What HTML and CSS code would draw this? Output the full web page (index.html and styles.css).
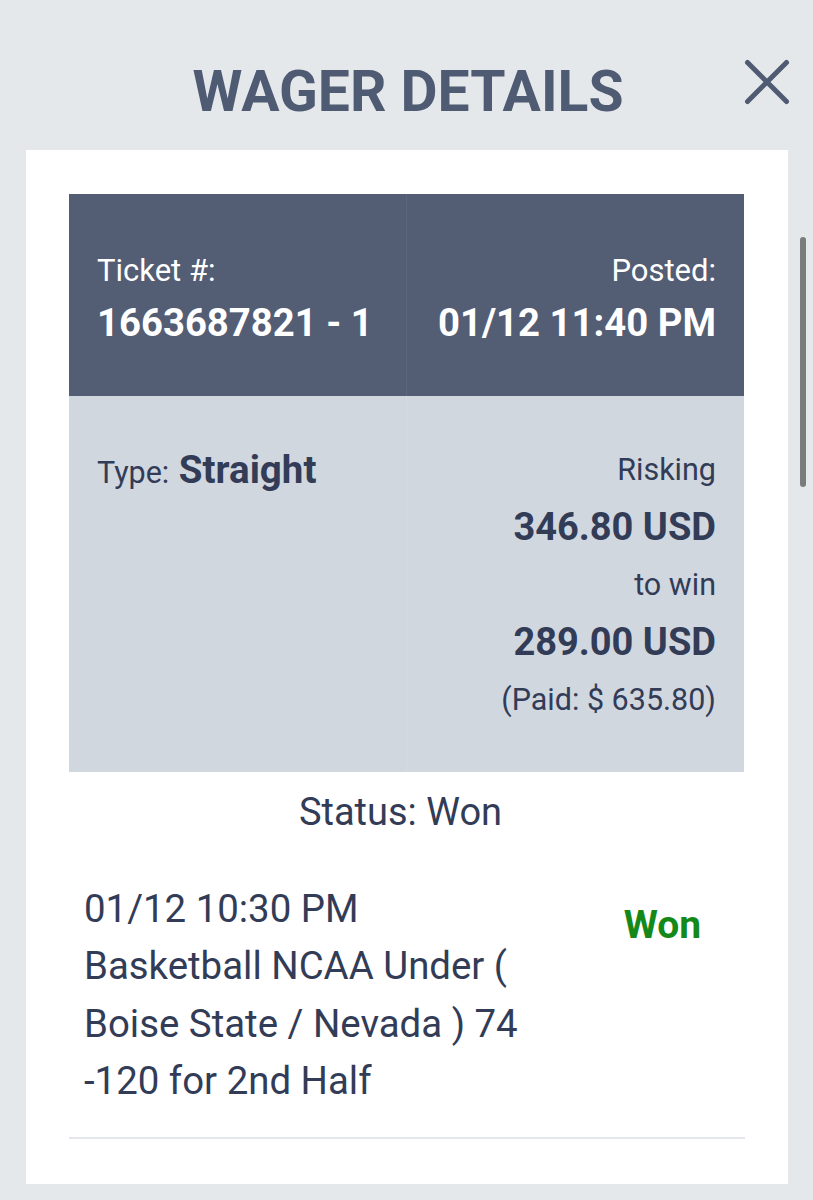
FILE: index.html
```html
<!DOCTYPE html>
<html>
<head>
<meta charset="utf-8">
<link rel="stylesheet" href="styles.css">
</head>
<body>
<div class="page">
  <header class="top">
    <h1 class="title">WAGER DETAILS</h1>
    <button class="close" aria-label="Close">
      <svg width="48" height="48" viewBox="0 0 48 48"><path d="M4.5 4.5 L43.5 43.5 M43.5 4.5 L4.5 43.5" stroke="#4f5a73" stroke-width="5" stroke-linecap="round" fill="none"/></svg>
    </button>
  </header>
  <main class="card">
    <div class="ticket">
      <div class="cell dark left">
        <div class="label">Ticket #:</div>
        <div class="value">1663687821 - 1</div>
      </div>
      <div class="cell dark right">
        <div class="label">Posted:</div>
        <div class="value">01/12 11:40 PM</div>
      </div>
      <div class="cell light left">
        <div class="type"><span class="type-label">Type:</span> <span class="type-value">Straight</span></div>
      </div>
      <div class="cell light right amounts">
        <div class="amt-label">Risking</div>
        <div class="amt">346.80 USD</div>
        <div class="amt-label">to win</div>
        <div class="amt">289.00 USD</div>
        <div class="amt-label">(Paid: $ 635.80)</div>
      </div>
    </div>
    <div class="status">Status: Won</div>
    <div class="bet">
      <div class="bet-text">01/12 10:30 PM<br>Basketball NCAA Under ( Boise State / Nevada ) 74 -120 for 2nd Half</div>
      <div class="bet-result">Won</div>
    </div>
    <div class="rule"></div>
  </main>
  <div class="scrollbar"></div>
</div>
</body>
</html>
```
FILE: styles.css
```css
html, body {
  margin: 0;
  padding: 0;
}
body {
  background: #e5e8eb;
  font-family: Roboto, "Noto Sans", sans-serif;
  color: #323c57;
  width: 813px;
  height: 1200px;
  overflow: hidden;
}
.page {
  position: relative;
  height: 1200px;
}
.top {
  height: 150px;
  display: flex;
  align-items: center;
  justify-content: center;
  position: relative;
}
.title {
  margin: 0;
  padding-top: 34px;
  padding-left: 3px;
  font-size: 57px;
  line-height: 66px;
  font-weight: 700;
  color: #4f5a73;
}
.close {
  position: absolute;
  right: 22px;
  top: 58px;
  border: 0;
  background: none;
  padding: 0;
  width: 48px;
  height: 48px;
}
.close svg { display: block; }
.card {
  margin-left: 26px;
  width: 762px;
  background: #ffffff;
  padding: 44px 43px 45px;
  box-sizing: border-box;
}
.ticket {
  display: grid;
  grid-template-columns: 337px 338px;
  grid-template-rows: 202px 376px;
}
.cell {
  box-sizing: border-box;
  padding: 0 28px;
}
.dark {
  background: #535d74;
  color: #ffffff;
  display: flex;
  flex-direction: column;
  justify-content: center;
}
.light {
  background: #d1d7df;
}
.right { text-align: right; border-left: 1px solid rgba(255,255,255,0.07); }
.dark.right { border-left-color: #5c6579; }
.light.right { border-left-color: #d6dbe2; }
.label {
  font-size: 31px;
  line-height: 36px;
  margin-top: 8px;
}
.value {
  font-size: 38.3px;
  font-weight: 700;
  line-height: 44px;
  margin-top: 12px;
}
.type {
  padding-top: 54px;
  font-size: 30.5px;
  line-height: 40px;
}
.type-value {
  font-size: 38.5px;
  font-weight: 700;
  margin-left: 2px;
}
.amounts {
  padding-top: 45px;
}
.amt-label {
  font-size: 30.5px;
  line-height: 58px;
}
.amt {
  font-size: 38px;
  font-weight: 700;
  line-height: 57px;
}
.status {
  text-align: center;
  font-size: 38px;
  line-height: 44px;
  padding-top: 18px;
  margin-right: 13px;
}
.bet {
  display: flex;
  padding: 46px 0 0 15px;
}
.bet-text {
  width: 490px;
  font-size: 38.4px;
  line-height: 57.3px;
}
.bet-result {
  flex: 1;
  text-align: center;
  color: #14891a;
  font-weight: 700;
  font-size: 39px;
  line-height: 57px;
  padding-top: 17px;
  padding-left: 6px;
}
.rule {
  height: 2px;
  background: #e3e6ea;
  margin-top: 28px;
}
.scrollbar {
  position: absolute;
  left: 800px;
  top: 237px;
  width: 6px;
  height: 250px;
  border-radius: 3px;
  background: #7a7b7c;
}
```
